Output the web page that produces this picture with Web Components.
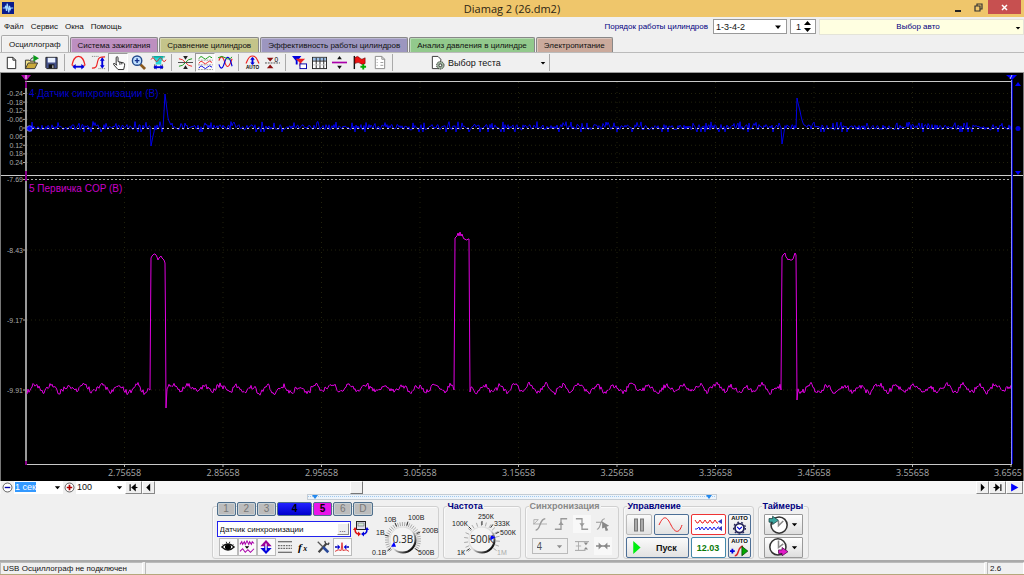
<!DOCTYPE html>
<html lang="ru">
<head>
<meta charset="utf-8">
<title>Diamag 2 (26.dm2)</title>
<style>
html,body{margin:0;padding:0}
body{background:#f0f0f0;font-family:"Liberation Sans",Arial,sans-serif;font-size:8px;color:#111}
</style>
</head>
<body>
<dm-app></dm-app>
<script>
const ICONS = {
app:'<rect width="16" height="16" fill="#0a1c8c"/><path d="M1 8h3l1-3 1 7 1-10 2 12 1-9 1 5 1-2h3" fill="none" stroke="#9fd4ff" stroke-width="1.6"/>',
new:'<path d="M3.5 2.500h6l3 3v9h-9z" fill="#fff" stroke="#222"/><path d="M9.500 2.500v3h3" fill="none" stroke="#222"/>',
open:'<path d="M1.500 14.500v-9h4l1 1h5v2" fill="#efe08a" stroke="#333"/><path d="M1.500 14.500l3-6h10l-3 6z" fill="#c9a83a" stroke="#333"/><path d="M10 0l6 3.500-6 3.500z" fill="#0a9a1a"/><path d="M7 6c0-2 1-3 3-3" fill="none" stroke="#222"/>',
save:'<path d="M2 2.500h12v12H3l-1-1z" fill="#44518a" stroke="#222"/><rect x="4" y="3" width="8" height="5" fill="#e8f0ff"/><rect x="5" y="10" width="6" height="4" fill="#111"/><rect x="9" y="11" width="1" height="3" fill="#fff"/>',
arcH:'<path d="M1 11C2 7 3 1.500 8 1.500S14 7 15 11" fill="none" stroke="#e22" stroke-width="1.200"/><path d="M1 11h2M13 11h2" stroke="#e22"/><path d="M3 12.500h10" stroke="#00d" stroke-width="2"/><path d="M5 9.500v6L1.500 12.500zM11 9.500v6l3.500-3z" fill="#00d"/>',
arcV:'<path d="M1 14c5 0 5-2 6-7s3-5 8-5" fill="none" stroke="#e22" stroke-width="1.200" /><path d="M1 1.500h7M8 14.500h7" stroke="#777" stroke-dasharray="1 1"/><path d="M12 4v9" stroke="#00d" stroke-width="2"/><path d="M9.500 6L12 2.500 14.500 6zM9.500 11h5L12 14.500z" fill="#00d"/>',
hand:'<path d="M5.500 9V2.500q1-1.500 2 0V7l6 1.500q1.500.5 1 2.500l-1 4.500h-6L3 10.500q-1-2 1-1.500l2 2z" fill="#fff" stroke="#222"/><path d="M9.500 7.500v3M11.500 8v2" stroke="#222"/>',
zoom:'<path d="M10 10l5 5" stroke="#8a5a20" stroke-width="3"/><circle cx="6.500" cy="6" r="5" fill="#bfe0ff" stroke="#234a8c" stroke-width="1.500"/><path d="M4 6h5M6.500 3.500v5" stroke="#12308c" stroke-width="1.500"/>',
film:'<path d="M3 1h10v3l-2 3v3H5V7L3 4z" fill="#25d8d8"/><path d="M0 5q2-4 4 0t4 0 4 0 4 0" fill="none" stroke="#d22"/><path d="M1 2h14" stroke="#087" /><path d="M4 10v5M12 10v5" stroke="#333"/><path d="M3 13h10" stroke="#00d" stroke-width="2"/><path d="M6 10.500v5L3 13zM10 10.500v5l3-2.500z" fill="#00d"/>',
cross:'<path d="M1 4q4 0 7 4t7 4" fill="none" stroke="#e22"/><path d="M1 12q4 0 7-4t7-4" fill="none" stroke="#191"/><path d="M0 8h16" stroke="#444"/><path d="M5.500 1h5L8 5zM5.500 15h5L8 11z" fill="#222"/>',
waves3:'<path d="M1 4q2-4 4.500-1t4.500 0 5 0" fill="none" stroke="#191"/><path d="M1 9q2-4 4.500-1t4.500 0 5 0" fill="none" stroke="#e22"/><path d="M1 14q2-4 4.500-1t4.500 0 5 0" fill="none" stroke="#00d"/><path d="M0 5.500h16M0 10.500h16M0 15.500h16" stroke="#999" stroke-dasharray="2 1"/>',
waves2:'<path d="M1 6C3 0 5 1 7 7s4 9 8-3" fill="none" stroke="#e22" stroke-width="1.200"/><path d="M1 10c2 6 4 5 6-2s5-9 8 4" fill="none" stroke="#00d" stroke-width="1.200"/><path d="M0 3q4-3 8 0t7-1" fill="none" stroke="#191"/>',
arcAuto:'<path d="M1 9C3 6 3 1 8 1s5 5 7 8" fill="none" stroke="#e22" stroke-width="1.200"/><path d="M8 3v7" stroke="#00d" stroke-width="2"/><path d="M5.500 5L8 2l2.500 3zM5.500 8h5L8 10.500z" fill="#00d"/><text x="8" y="15" font-size="5" font-weight="700" text-anchor="middle">AUTO</text>',
zero:'<path d="M2 3h7L5.500 7zM2 14h7L5.500 10z" fill="#8b1010"/><path d="M0 8.500h16" stroke="#444" stroke-dasharray="2 1"/><text x="10" y="7" font-size="7">0</text>',
filter:'<path d="M0 1h10L6 6v4H4V6z" fill="#00d"/><path d="M4 4h10l-4 4v4H8V8z" fill="#e22"/><rect x="8.500" y="9.500" width="7" height="5" fill="#fff" stroke="#00a"/>',
table:'<rect x=".5" y="2.500" width="15" height="12" fill="#fff" stroke="#222"/><rect x="1" y="3" width="14" height="3" fill="#9cc0ea"/><path d="M4.500 3v11M8.500 3v11M12.500 3v11M1 6.500h14" stroke="#222"/><path d="M1 10.500h14" stroke="#ccc"/>',
split:'<path d="M0 8h16" stroke="#a0a" stroke-width="1.800"/><path d="M8 1l2.500 3.500h-5zM8 15l2.500-3.500h-5z" fill="#111"/>',
flag:'<path d="M2.500 1v14" stroke="#111" stroke-width="1.500"/><path d="M3 3q3-3 5 0t6 0v6q-3 2-5 0T3 9z" fill="#e11" stroke="#600" stroke-width=".6"/><path d="M12 9.500v6M9 12.500h6" stroke="#0a0" stroke-width="2"/>',
note:'<path d="M3.500 1.500h7l3 3v10h-10z" fill="#fff" stroke="#888"/><path d="M10.500 1.500v3h3" fill="none" stroke="#888"/><path d="M5 5h1M5 8h1M5 11h1M9 8h3M9 11h3" stroke="#999"/>',
gearpage:'<path d="M2.500 1.500h6l3 3v10h-9z" fill="#fff" stroke="#333"/><circle cx="11" cy="11" r="4" fill="#9fb59f" stroke="#333" stroke-dasharray="1.500 1"/><circle cx="11" cy="11" r="1.500" fill="#fff" stroke="#333"/>',
minus:'<circle cx="8" cy="8" r="6.500" fill="#fff" stroke="#222"/><path d="M4 8h8" stroke="#00a" stroke-width="2"/>',
plus:'<circle cx="8" cy="8" r="6.500" fill="#fff" stroke="#222"/><path d="M4 8h8M8 4v8" stroke="#a00" stroke-width="2.500"/>',
first:'<path d="M2 2v12" stroke="#000" stroke-width="2"/><path d="M5 8h10" stroke="#000" stroke-width="2"/><path d="M12 1v14L4 8z"/>',
prev:'<path d="M11 1v14L4 8z"/>',next:'<path d="M5 1v14l7-7z"/>',
last:'<path d="M14 2v12" stroke="#000" stroke-width="2"/><path d="M1 8h10" stroke="#000" stroke-width="2"/><path d="M4 1v14l8-7z"/>',
play:'<path d="M2 1v14l13-7z" fill="#00f"/>',
run:'<path d="M4 0v16l9-8z" fill="#0e1"/>',
eye:'<path d="M1 8q7-7 14 0-7 7-14 0z" fill="#fff" stroke="#111" stroke-width="1.500"/><circle cx="8" cy="8" r="3.500"/><path d="M2 5l1 1M6 2l.5 2M10 2l-.5 2M14 5l-1 1" stroke="#111"/>',
smooth:'<path d="M0 5l2-3 1 3 2-3 1 3 2-4 2 4 1-3 2 3 1-3 2 2" fill="none" stroke="#a0a" stroke-width="1.200"/><path d="M5.500 7h5L8 10z"/><path d="M0 13l3-3 3 4 3-3 3 3 4-4" fill="none" stroke="#a0a" stroke-width="1.200"/>',
updown:'<path d="M8 3v10" stroke="#00d" stroke-width="4"/><path d="M1.500 7L8 0l6.500 7z" fill="#909"/><path d="M1.500 9L8 16l6.500-7z" fill="#00d"/><path d="M8 4v8" stroke="#fff" stroke-width="1.500"/>',
lines:'<path d="M0 2h16M0 14h16" stroke="#333"/><path d="M0 6.500h16M0 9.500h16" stroke="#333" stroke-dasharray="2 1"/>',
fx:'<text x="1" y="12" font-size="13" font-style="italic" font-weight="700" font-family="Liberation Serif,serif">f</text><text x="7" y="13" font-size="9" font-style="italic" font-weight="700" font-family="Liberation Serif,serif">x</text>',
tools:'<path d="M3 14L12 4" stroke="#444" stroke-width="2.500"/><path d="M10 1l1 3 3 1 1-2" fill="none" stroke="#444" stroke-width="1.500"/><path d="M2 2l6 6" stroke="#555" stroke-width="1.500"/><path d="M8 8l6 6" stroke="#2a4a9a" stroke-width="3"/>',
sync:'<path d="M0 8h3M13 8h3" stroke="#00a" stroke-width="1.500"/><path d="M3 5l3 3-3 3zM13 5l-3 3 3 3z" fill="#00d"/><path d="M0 13q4-3 7-1l1-9 1 9q4-2 7 1" fill="none" stroke="#d22"/>',
device:'<rect x="3.500" y=".5" width="9" height="8" fill="#dde" stroke="#222"/><rect x="5" y="2" width="6" height="3" fill="#cfe6d4" stroke="#666" stroke-width=".6"/><path d="M2 8q0 5 4 5" fill="none" stroke="#d11" stroke-width="1.500"/><path d="M0 9l2-3 2 3zM5 10.500v5l3-2.500z" fill="#d11"/><path d="M14 8q0 5-4 5" fill="none" stroke="#00d" stroke-width="1.500"/><path d="M12 9l2-3 2 3zM11 10.500v5L8 13z" fill="#00d"/>',
sy1:'<path d="M0 8h16M1 3v5l5-5z" fill="none" stroke="#aaa"/><path d="M3 15c6 0 4-13 11-13" fill="none" stroke="#999" stroke-width="1.500"/>',
sy2:'<path d="M1 14h7V2h7" fill="none" stroke="#999" stroke-width="1.500"/><path d="M5 9l3-4 3 4z" fill="#999"/>',
sy3:'<path d="M1 2h7v12h7" fill="none" stroke="#999" stroke-width="1.500"/><path d="M5 7l3 4 3-4z" fill="#999"/>',
sy4:'<path d="M0 6h8M1 14C6 14 4 2 10 2" fill="none" stroke="#999" stroke-width="1.300"/><path d="M7 5l8 5-3 1 2 4-3 1-1-4-3 1z" fill="#888"/>',
sy5:'<path d="M0 3h16M0 13h12" stroke="#999"/><path d="M1 8h6M4 3v10" fill="none" stroke="#aaa"/><path d="M10 4h5l-2.500 3zM10 12h5l-2.500-3z" fill="#888"/>',
sy6:'<path d="M0 8h16" stroke="#999" stroke-width="2"/><path d="M3 4l4 4-4 4zM13 4L9 8l4 4z" fill="#888"/>',
pause:'<rect x="3.500" y="2" width="3" height="12" fill="#aaa" stroke="#777"/><rect x="9.500" y="2" width="3" height="12" fill="#aaa" stroke="#777"/>',
gearauto:'<text x="8" y="4" font-size="5" font-weight="700" text-anchor="middle">AUTO</text><circle cx="8" cy="11" r="3.800" fill="#fff" stroke="#225" stroke-width="1.500"/><circle cx="8" cy="11" r="5" fill="none" stroke="#225" stroke-dasharray="1.500 2"/><path d="M6 10l2 2 2-2" fill="none" stroke="#00d"/>',
runauto:'<text x="8" y="4" font-size="5" font-weight="700" text-anchor="middle">AUTO</text><path d="M0 11h4M2 9v4" stroke="#00d" stroke-width="1.500"/><path d="M4 15c4 0 2-8 7-8" fill="none" stroke="#d22" stroke-width="1.300"/><path d="M10 7v8l5-4z" fill="#0a0" stroke="#030" stroke-width=".6"/>',
timerin:'<circle cx="8.500" cy="8.500" r="6.800" fill="#fff" stroke="#333" stroke-width="1.300"/><path d="M8 5v4l4-4" fill="none" stroke="#888" stroke-width="1.300"/><path d="M0 3h3V1l5 3.500L3 8V6H0z" fill="#3aa6a0" stroke="#133" stroke-width=".6"/>',
timerout:'<circle cx="7.500" cy="7.500" r="6.800" fill="#fff" stroke="#333" stroke-width="1.300"/><path d="M8 2v6l4-3" fill="none" stroke="#888" stroke-width="1.300"/><path d="M8 10h3V8l5 3.500-5 3.500v-2H8z" fill="#e21cc8" stroke="#404" stroke-width=".6"/>',
down:'<path d="M2 5h12l-6 7z"/>'
};
const def = (name, css, html, after) => customElements.define(name, class extends HTMLElement {
  constructor(){
    super();
    const t = document.createElement('template');
    t.innerHTML = `<style>*{box-sizing:border-box}button,select,input{font:inherit;color:inherit;margin:0;padding:0;border:0;background:none;border-radius:0}select,input{appearance:none;min-width:0}${css}</style>${html}`;
    this.attachShadow({mode:'open'}).append(t.content.cloneNode(true));
  }
  connectedCallback(){ if (after) after(this, this.shadowRoot); }
});

def('dm-icon', ':host{display:inline-block;width:16px;height:16px;flex:none}svg{display:block;width:100%;height:100%;overflow:visible}', '<svg viewBox="0 0 16 16" aria-hidden="true"></svg>',
  (h, r) => { r.querySelector('svg').innerHTML = ICONS[h.getAttribute('name')]; });

def('dm-titlebar', `
:host{display:grid;grid-template-columns:1fr auto 1fr;height:17px;background:#efc66b;color:#2b2413}
.l{padding:2px}.l dm-icon{width:12px;height:12px}
h1{margin:0;font:11px/17px "Open Sans","Noto Sans",sans-serif}
.w{display:flex;justify-content:flex-end;align-items:flex-start;padding-right:3px}
button{width:20px;height:14px;display:grid;place-items:center}
button svg{width:9px;height:9px}
.x{width:33px;background:#c75050}`,
`<div class="l"><dm-icon name="app"></dm-icon></div><h1>Diamag 2 (26.dm2)</h1><div class="w">
<button aria-label="Свернуть"><svg viewBox="0 0 9 9"><path d="M1 7h6v2H1z" fill="#222"/></svg></button>
<button aria-label="Развернуть"><svg viewBox="0 0 9 9"><path d="M1 3h5v5H1zM3 3V1h5v5H6" fill="none" stroke="#333" stroke-width="1.200"/></svg></button>
<button class="x" aria-label="Закрыть"><svg viewBox="0 0 9 9"><path d="M2 2l5 5M7 2L2 7" stroke="#fff" stroke-width="1.500"/></svg></button></div>`);

def('dm-menubar', `
:host{display:flex;height:18px;align-items:center;padding-left:4px}
nav{display:flex;gap:7px;margin-top:2px}
nav button{line-height:12px}
.r{margin-left:auto;display:flex;align-items:center;height:16px;margin-top:1px;gap:3px}
label{color:#000080;margin-right:2px}
.f{position:relative;display:flex;height:15px;border:1px solid #999;background:#fff;font-size:9px}
.f dm-icon{position:absolute;right:4px;top:3px;width:8px;height:8px;pointer-events:none}
select{width:72px;padding-left:2px}input{width:24px;padding-left:5px}
input::-webkit-inner-spin-button{appearance:none}
.f .sp{position:absolute;right:4px;top:1px;width:7px;height:11px;pointer-events:none}
.car{position:relative;width:205px;height:16px;background:#ffffe1;color:#000080;border:1px solid #e4e4d8;padding-right:7px}
.car dm-icon{position:absolute;right:2px;top:5px;width:6px;height:6px;color:#000}`,
`<nav><button>Файл</button><button>Сервис</button><button>Окна</button><button>Помощь</button></nav>
<div class="r"><label for="o">Порядок работы цилиндров</label>
<div class="f"><select id="o"><option>1-3-4-2</option><option>1-2-4-3</option></select><dm-icon name="down"></dm-icon></div>
<div class="f"><input type="number" value="1" aria-label="Цилиндр"><svg class="sp" viewBox="0 0 7 11"><path d="M0 4h7L3.500 0zM0 7h7l-3.500 4z"/></svg></div>
<button class="car">Выбор авто<dm-icon name="down"></dm-icon></button></div>`);

def('dm-tab', `
:host{display:block}
button{display:block;height:15px;line-height:13px;padding:0 7px;border:1px solid #888;border-bottom:0;border-radius:2px 2px 0 0;background:var(--c);box-shadow:inset 1px 1px 0 rgba(255,255,255,.35);white-space:nowrap}
:host([selected]) button{height:17px;padding:0 7px;background:#f0f0f0;border-color:#aaa}`,
`<button role="tab"><slot></slot></button>`);

def('dm-tabs', `:host{display:flex;align-items:flex-end;height:17px;gap:1px;padding-left:1px}`, `
<dm-tab selected>Осциллограф</dm-tab>
<dm-tab style="--c:#bd8fc0">Система зажигания</dm-tab>
<dm-tab style="--c:#c4c48a">Сравнение цилиндров</dm-tab>
<dm-tab style="--c:#9c96bf">Эффективность работы цилиндров</dm-tab>
<dm-tab style="--c:#92c98c">Анализ давления в цилиндре</dm-tab>
<dm-tab style="--c:#cbaa9c">Электропитание</dm-tab>`);

def('dm-toolbar', `
:host{display:block;height:21px;border-top:1px solid #bbb;border-bottom:1px solid #999;padding-left:1px}
div{display:flex;height:19px;align-items:center}
button{width:20px;height:19px;display:grid;place-items:center;flex:none}
button.on{background:#f9f9f9;border:1px solid #999;border-right-color:#fff;border-bottom-color:#fff}
i{width:7px;height:17px;flex:none;background:linear-gradient(#aaa,#aaa) 3px 0/1px 100% no-repeat}
dm-icon{width:15px;height:15px}
.t{display:flex;align-items:center;width:116px;gap:3px;margin-left:34px}
.t span{font-size:9px}`,
'<div></div>', (h, r) => {
  const names = {new:'Новый',open:'Открыть',save:'Сохранить',arcH:'По ширине',arcV:'По высоте',hand:'Рука',zoom:'Масштаб',film:'Фрагмент',cross:'Центр',waves3:'Раздельно',waves2:'Вместе',arcAuto:'Авто',zero:'Ноль',filter:'Фильтр',table:'Таблица',split:'Разделить',flag:'Метка',note:'Заметка'};
  const seq = 'new open save | arcH arcV hand* zoom film | cross waves3* waves2 | arcAuto zero | filter table split flag note |'.split(' ');
  r.querySelector('div').innerHTML = seq.map(s => s === '|' ? '<i></i>' :
    `<button class="${s.endsWith('*') ? 'on' : ''}" aria-label="${names[s.replace('*','')]}"><dm-icon name="${s.replace('*','')}"></dm-icon></button>`).join('') +
    '<button class="t"><dm-icon name="gearpage"></dm-icon><span>Выбор теста</span><dm-icon name="down" style="width:6px;height:6px;margin-left:auto"></dm-icon></button><i></i>';
});

def('dm-scope', `
:host{display:block;background:#000}
svg{display:block;width:100%;height:auto}
.y{font-size:7px;fill:#aaa;text-anchor:end}.x{font:9px "Open Sans","Noto Sans",sans-serif;fill:#aaa;text-anchor:middle}
.n{font-size:10px}`,
'<svg viewBox="0 73 1024 408"></svg>', (h, r) => {
  let seed = 7;
  const rnd = () => (seed = (seed * 16807) % 2147483647) / 2147483647;
  const path = pts => 'M' + pts.map(p => p[0] + ' ' + p[1].toFixed(1)).join('L');
  const xs = [...Array(10).keys()].map(i => 124.500 + i * 98.500);
  let s = '';
  for (const x of xs) s += `<path d="M${x} 82V464" stroke="#22220c" stroke-dasharray="1 4"/><path d="M${x} 464v3" stroke="#aaa"/>`;
  xs.forEach((x, i) => s += i < 9 ? `<text class="x" x="${x}" y="476">${(2.75658 + i / 10).toFixed(5)}</text>` : '<text class="x" style="text-anchor:end" x="1022" y="476">3.6565</text>');
  ['-0.24','-0.18','-0.12','-0.06','0','0.06','0.12','0.18','0.24'].forEach((t, i) => {
    const y = 93.500 + i * 8.625;
    s += `<path d="M27 ${y}H1011" stroke="#22220c" stroke-dasharray="1 3"/><path d="M23 ${y}h3" stroke="#aaa"/><text class="y" x="23" y="${y + 2.500}">${t}</text>`;
  });
  [['-7.69',179.500],['-8.43',250],['-9.17',320],['-9.91',390]].forEach(([t, y]) => {
    s += `<path d="M27 ${y}H1011" stroke="#22220c" stroke-dasharray="1 3"/><path d="M23 ${y}h3" stroke="#aaa"/><text class="y" x="23" y="${y + 2.500}">${t}</text>`;
  });
  s += '<path d="M0 175.500H1024" stroke="#ccc"/><path d="M27 179.500H1011" stroke="#aaa" stroke-dasharray="2 2"/>';
  s += '<path d="M26 81.500H1012M26 464.500H1012" stroke="#c8c8c8"/><path d="M26 81V465" stroke="#999" stroke-width="2"/><path d="M26 82v6M26 171v10M26 461v4" stroke="#808" stroke-width="2"/>';
  s += '<path d="M.5 73V481M1023.500 73V481" stroke="#777"/>';
  const spikes = {150:126,151:146,152:141,153:136,154:132,156:130,163:128,164:112,165:94,166:102,167:110,168:118,169:121,170:123,171:125,
    781:128,782:144,783:138,784:132,796:128,797:98,798:103,799:107,800:111,801:116,802:120,803:123,804:125};
  const b = [];
  for (let x = 31; x < 1012; x++) {
    const k = rnd();
    b.push([x, spikes[x] || (k > .92 ? 121.500 + rnd() * 2 : k < .04 ? 132 : 124.500 + rnd() * 5.500)]);
  }
  s += `<path d="${path(b)}" fill="none" stroke="#0000e8" stroke-width="1"/>`;
  s += '<path d="M27 128.500H1011" stroke="#ccc" stroke-dasharray="2 3"/>';
  const pulses = [[150,165,[258,256,255,254,254,255,257,260,258,257,256,258,259,260,263],408],
    [454,469,[238,237,236,233,236,232,236,234,237,239,239,240,240,239,239],392],
    [781,796,[257,255,254,253,257,258,260,259,260,260,260,259,256,253,255],400]];
  const m = [];
  let wob = 0;
  for (let x = 27; x < 1012; x++) {
    const p = pulses.find(q => x >= q[0] && x <= q[1] + 1);
    wob = wob * .8 + (rnd() - .5) * 2;
    if (p && x <= p[1]) {
      if (x === p[0]) m.push([x, 390], [x + .5, 320]);
      m.push([Math.min(x + 1, p[1]), p[2][Math.min(x - p[0], p[2].length - 1)]]);
    } else if (p) m.push([x - .5, 320], [x, p[3]]);
    else m.push([x, 388.500 - 3.300 * Math.sin(x / 16.500 * 6.283 + Math.sin(x / 40)) + wob + (rnd() - .5) * 4.500]);
  }
  s += `<path d="${path(m)}" fill="none" stroke="#e000e0" stroke-width="1"/>`;
  s += '<text class="n" x="29" y="97" fill="#0000c8">4 Датчик синхронизации (В)</text><text class="n" x="29" y="192" fill="#c800c8">5 Первичка COP (В)</text>';
  s += '<path d="M21 75h10l-5 6z" fill="#a0a"/><path d="M26 75v4" stroke="#fff"/><path d="M1006 75h11l-5 5z" fill="#00f"/><path d="M1012 75l-2 4" stroke="#bbf"/>';
  s += '<path d="M1011.500 80V464" stroke="#88f"/><path d="M1012.500 80V464" stroke="#00b"/><circle cx="29.500" cy="128.500" r="2.800" fill="#00f" stroke="#99f" stroke-width=".6"/><circle cx="1018" cy="128.500" r="2.500" fill="#00d"/><path d="M1015 86h6l-3-4zM1015 171h6l-3 4z" fill="#00f"/>';
  r.querySelector('svg').innerHTML = s;
});

def('dm-scrollrow', `
:host{display:flex;height:13px;padding:0 1px;background:#f7f7f7;font-size:9px}
button{background:#f0f0f0;border:1px solid #fff;border-right-color:#888;border-bottom-color:#888;display:grid;place-items:center;flex:none;width:13px}
button dm-icon{width:9px;height:9px}.z dm-icon{width:11px;height:11px}
.z{border-color:transparent}
.f{position:relative;background:#fff;display:flex;flex:none}
.f dm-icon{position:absolute;right:2px;top:3px;width:7px;height:7px;pointer-events:none}
.f select{width:49px;padding-left:1px;line-height:13px}
.f.h select{background:linear-gradient(#39f,#39f) 1px 1px/21px 10px no-repeat;color:#fff}
.w{width:17px}
.track{flex:1;min-width:0;height:13px;margin-right:3px}
.track::-webkit-slider-thumb{appearance:none;width:13px;height:13px;background:#f0f0f0;border:1px solid #fff;border-right-color:#777;border-bottom-color:#777}`,
`<button class="z" aria-label="Уменьшить"><dm-icon name="minus"></dm-icon></button>
<div class="f h"><select aria-label="Развёртка"><option>1 сек</option></select><dm-icon name="down"></dm-icon></div>
<button class="z" aria-label="Увеличить"><dm-icon name="plus"></dm-icon></button>
<div class="f p"><select aria-label="Масштаб"><option>100</option></select><dm-icon name="down"></dm-icon></div>
<button class="w" aria-label="В начало"><dm-icon name="first"></dm-icon></button>
<button aria-label="Назад"><dm-icon name="prev"></dm-icon></button>
<input class="track" type="range" min="0" max="1000" value="242" aria-label="Прокрутка">
<button aria-label="Вперёд"><dm-icon name="next"></dm-icon></button>
<button class="w" aria-label="В конец"><dm-icon name="last"></dm-icon></button>
<button class="w" aria-label="Воспроизвести"><dm-icon name="play"></dm-icon></button>`);

def('dm-splitter', `
:host{display:flex;justify-content:center;height:6px}
div{width:40%;display:flex;align-items:center;justify-content:space-between;padding:0 4px;border:1px solid #c4ccd4;background:linear-gradient(90deg,#9cc8f0 1px,transparent 1px) 0 1px/2px 1px repeat-x #eef4fa}
svg{width:6px;height:4px}`,
`<div role="separator"><svg viewBox="0 0 6 4"><path d="M0 0h6L3 4z" fill="#28e"/></svg><svg viewBox="0 0 6 4"><path d="M0 0h6L3 4z" fill="#28e"/></svg></div>`);

def('dm-group', `
:host{display:block}
fieldset{position:relative;margin:0;padding:0;min-width:0;height:53px;border:1px solid #d0d0d0;border-radius:3px;box-shadow:inset 1px 1px 0 #fafafa}
legend{position:absolute;left:3px;top:-6px;padding:0 1px;background:#f0f0f0;font-weight:700;font-size:9px;line-height:11px;color:#000080;white-space:nowrap}
:host([off]) legend{color:#888}
:host(:not([label])) legend{display:none}`,
`<fieldset><legend></legend><slot></slot></fieldset>`, (h, r) => { r.querySelector('legend').textContent = h.getAttribute('label') || ''; });

def('dm-channels', `
:host{display:flex;flex-direction:column;width:160px;padding-left:4px;flex:none}
.r{display:flex;gap:1px;margin-top:-5px}
.r button{flex:20;height:14px;border:1px solid #4f6f8c;border-radius:2px;background:#bcbcbc;color:#777;font-size:10px;line-height:12px;box-shadow:inset 0 0 0 1px #c8d0d4}
.r button.a{flex:38;background:linear-gradient(#22f,#00c);color:#000;font-weight:700;box-shadow:none}
.r button.b{background:#e815e8;color:#000;font-weight:700;box-shadow:none}
.n{display:flex;align-items:center;gap:2px;margin-top:5px}
.n div{display:flex;width:134px;height:16px;border:1px solid #22e;background:#fff}
.n input{flex:1;padding-left:2px}.n div button{width:12px;margin:1px;background:#eee;border:1px solid #fff;border-right-color:#888;border-bottom-color:#888;line-height:7px}
.t{display:flex;margin:1px 0 0 2px}
.t button{width:19px;height:18px;display:grid;place-items:center}
.t .on{background:#fafafa;border:1px solid #bbb}
.t dm-icon{width:14px;height:14px}`,
`<div class="r"><button>1</button><button>2</button><button>3</button><button class="a">4</button><button class="b">5</button><button>6</button><button>D</button></div>
<div class="n"><div><input aria-label="Имя канала" value="Датчик синхронизации"><button>...</button></div><dm-icon name="device"></dm-icon></div>
<div class="t"><button class="on" aria-label="Показать"><dm-icon name="eye"></dm-icon></button><button class="on" aria-label="Сглаживание"><dm-icon name="smooth"></dm-icon></button><button class="on" aria-label="Смещение"><dm-icon name="updown"></dm-icon></button><button aria-label="Линии"><dm-icon name="lines"></dm-icon></button><button aria-label="Функция"><dm-icon name="fx"></dm-icon></button><button aria-label="Настройки"><dm-icon name="tools"></dm-icon></button><button class="on" aria-label="Синхронизация"><dm-icon name="sync"></dm-icon></button></div>`);

def('dm-knob', `
:host{display:block;position:relative;width:76px;height:51px;flex:none}
svg{display:block;width:100%;height:100%;overflow:visible}
text{font-size:7px;fill:#222}.v{font:10px "Open Sans","Noto Sans",sans-serif;text-anchor:middle}
input{position:absolute;inset:8px 20px 0;width:36px;height:36px;opacity:0}`,
`<svg viewBox="0 0 76 51"></svg><input type="range">`, (h, r) => {
  const cx = 38, cy = 33, ang = +h.getAttribute('pointer');
  const pt = (a, d) => [cx + d * Math.cos(a * Math.PI / 180), cy + d * Math.sin(a * Math.PI / 180)];
  const line = (a, d1, d2, c) => { const p = pt(a, d1), q = pt(a, d2); return `<path d="M${p}L${q}" stroke="${c}"/>`; };
  let s = '<defs><linearGradient id="g" x1="0" y1="0" x2="1" y2="1"><stop offset=".5" stop-color="#ddd"/><stop offset=".85" stop-color="#000"/></linearGradient></defs>';
  const step = +h.getAttribute('step');
  for (let a = 140; a <= 400; a += step) s += line(a, 14, 18, '#aaa');
  for (const a of h.getAttribute('major').split(',')) s += line(+a, 15, 19, '#333');
  s += `<circle cx="${cx}" cy="${cy}" r="13.500" fill="url(#g)"/><circle cx="${cx - .5}" cy="${cy - .5}" r="12" fill="#f4f4f4"/>`;
  s += `<text class="v" x="${cx}" y="${cy + 3}">${h.getAttribute('value')}</text>`;
  const [px, py] = pt(ang, 11);
  s += `<path d="${h.hasAttribute('side') ? `M${px-2} ${py-2}l5 2-5 3z` : `M${px-2} ${py+2}l5 0-2-5z`}" fill="#00f"/>`;
  for (const l of h.getAttribute('labels').split(';')) { const [t, x, y, c] = l.split(','); s += `<text x="${x}" y="${y}" ${c ? `style="fill:${c}"` : ''}>${t}</text>`; }
  r.querySelector('svg').innerHTML = s;
  r.querySelector('input').setAttribute('aria-label', h.getAttribute('value'));
});

def('dm-sync', `
:host{display:grid;grid-template-columns:repeat(4,21px);grid-template-rows:22px 22px;padding:6px 0 0 5px;width:92px;align-items:center}
button{width:18px;height:18px;display:grid;place-items:center}
dm-icon{width:14px;height:14px}
.on{background:#f8f8f8}
.f{grid-column:span 2;position:relative;width:36px;height:16px;border:1px solid #bbb;display:flex;margin-left:1px}
.f select{width:100%;padding-left:4px;opacity:1;font-size:10px;color:#555}.f dm-icon{position:absolute;right:4px;top:4px;width:7px;height:7px;opacity:.4}`,
`<button disabled aria-label="Уровень"><dm-icon name="sy1"></dm-icon></button><button disabled aria-label="Фронт"><dm-icon name="sy2"></dm-icon></button><button class="on" disabled aria-label="Спад"><dm-icon name="sy3"></dm-icon></button><button disabled aria-label="Вручную"><dm-icon name="sy4"></dm-icon></button>
<div class="f"><select disabled aria-label="Канал синхронизации"><option>4</option></select><dm-icon name="down"></dm-icon></div><button disabled aria-label="Порог"><dm-icon name="sy5"></dm-icon></button><button class="on" disabled aria-label="Центр"><dm-icon name="sy6"></dm-icon></button>`);

def('dm-control', `
:host{display:grid;grid-template-columns:26px 35px 35px 23px;gap:2px;grid-template-rows:21px 21px;padding:7px 0 0 2px;width:129px}
button{display:flex;align-items:center;justify-content:center;border:1px solid #4d6f96;border-radius:2px;background:linear-gradient(#fafafa,#e2e2e2);font-weight:700;font-size:9px}
.p{border-color:#bbb}.red{border-color:#e33;background:#fff}.go{grid-column:span 2;gap:13px;padding-right:7px}.go dm-icon{width:13px;height:13px}
.num{color:#0a7a0a;background:#fff;border-color:#48a}
svg{width:30px;height:17px;flex:none}
.au dm-icon{width:19px;height:19px}`,
`<button class="p" disabled aria-label="Пауза"><dm-icon name="pause"></dm-icon></button>
<button aria-label="Синус"><svg viewBox="0 0 30 17"><path d="M3 9C8-2 11 1 15 9s8 9 11 0" fill="none" stroke="#e22"/></svg></button>
<button class="red" aria-label="Каналы"><svg viewBox="0 0 30 17"><path d="M2 4l2 3 1 0 2-3 2 3 1 0 2-3 2 3 1 0 2-3 2 3 1 0 2-3 2 3h1" fill="none" stroke="#e22"/><path d="M2 13h2l2-2 1 3 2-3 2 3 2-3 2 3 2-3 2 3 2-3 2 3 2-3h1" fill="none" stroke="#22e"/><path d="M29 3v5l-4-2.500zM29 10v5l-4-2.500z" fill="#33b"/></svg></button>
<button class="au" aria-label="Автонастройка"><dm-icon name="gearauto"></dm-icon></button>
<button class="go"><dm-icon name="run"></dm-icon>Пуск</button><button class="num">12.03</button>
<button class="au" aria-label="Автопуск"><dm-icon name="runauto"></dm-icon></button>`);

def('dm-timers', `
:host{display:grid;gap:2px;grid-template-rows:21px 21px;padding:7px 5px 0;width:49px}
button{display:flex;align-items:center;justify-content:center;gap:3px;border:1px solid #999;border-radius:1px;background:linear-gradient(#fff,#dedede)}
dm-icon{width:19px;height:19px}.d{width:7px;height:7px}`,
`<button aria-label="Таймер пуска"><dm-icon name="timerin"></dm-icon><dm-icon class="d" name="down"></dm-icon></button><button aria-label="Таймер остановки"><dm-icon name="timerout"></dm-icon><dm-icon class="d" name="down"></dm-icon></button>`);

def('dm-status', `
:host{display:flex;height:13px;gap:2px;background:#f0f0f0;border-bottom:1px solid #b5a87c}
div{border:1px solid #bbb;border-bottom:0;border-right-color:#fff;padding-left:2px;line-height:11px;white-space:nowrap}
.a{width:143px}.b{flex:1}.c{width:37px}`,
`<div class="a">USB Осциллограф не подключен</div><div class="b"></div><div class="c">2.6</div>`);

def('dm-app', `
:host{display:flex;flex-direction:column;min-height:100vh}
.p{display:flex;justify-content:center;gap:4px;padding:6px 4px 0 0;height:60px}
.k{display:flex;width:225px}
.k dm-knob{margin-left:-8px}
.s{border-top:2px solid #aaa;margin-top:auto}`,
`<dm-titlebar></dm-titlebar><dm-menubar></dm-menubar><dm-tabs></dm-tabs><dm-toolbar></dm-toolbar>
<dm-scope></dm-scope><dm-scrollrow></dm-scrollrow><dm-splitter></dm-splitter>
<div class="p">
<dm-group><div class="k"><dm-channels></dm-channels><dm-knob value="0.3В" pointer="155" step="8" major="145,195,245,285,335,395" labels="10В,19,15;100В,43,13;1В,11,28;200В,57,26;0.1В,7,48;500В,53,48"></dm-knob></div></dm-group>
<dm-group label="Частота"><dm-knob side value="500К" pointer="345" step="16" major="145,225,270,305,335" labels="250К,34,12;100К,8,19;333К,50,19;500К,56,28;1К,13,48;1М,53,48,#aaa"></dm-knob></dm-group>
<dm-group label="Синхронизация" off><dm-sync></dm-sync></dm-group>
<dm-group label="Управление"><dm-control></dm-control></dm-group>
<dm-group label="Таймеры"><dm-timers></dm-timers></dm-group>
</div>
<div class="s"><dm-status></dm-status></div>`);
</script>
</body>
</html>
